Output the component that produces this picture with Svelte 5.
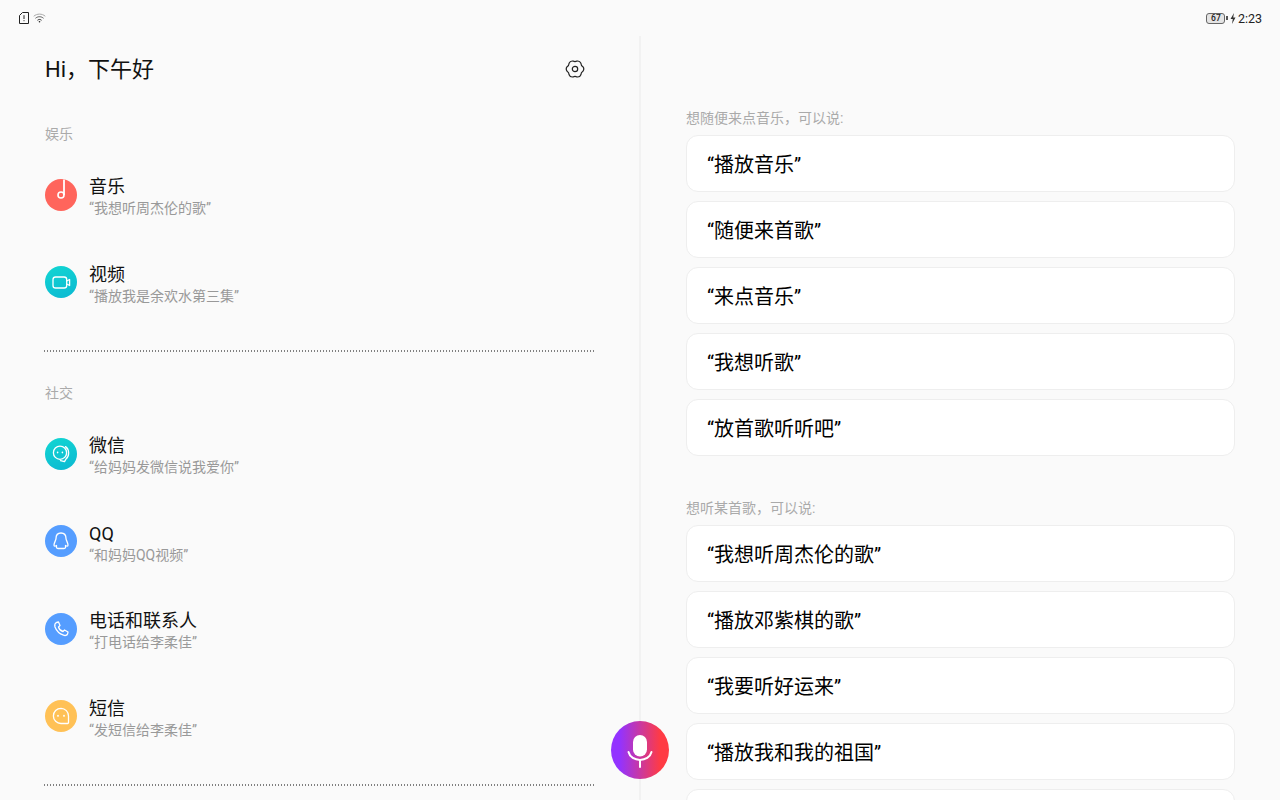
<script>
  const ent = [
    { t: '音乐', s: '“我想听周杰伦的歌”', k: 'music' },
    { t: '视频', s: '“播放我是余欢水第三集”', k: 'video' }
  ];
  const soc = [
    { t: '微信', s: '“给妈妈发微信说我爱你”', k: 'wechat' },
    { t: 'QQ', s: '“和妈妈QQ视频”', k: 'qq' },
    { t: '电话和联系人', s: '“打电话给李柔佳”', k: 'phone' },
    { t: '短信', s: '“发短信给李柔佳”', k: 'sms' }
  ];
  const groups = [
    { label: '想随便来点音乐，可以说:', items: ['“播放音乐”', '“随便来首歌”', '“来点音乐”', '“我想听歌”', '“放首歌听听吧”'] },
    { label: '想听某首歌，可以说:', items: ['“我想听周杰伦的歌”', '“播放邓紫棋的歌”', '“我要听好运来”', '“播放我和我的祖国”', ''] }
  ];
  const sections = [
    { label: '娱乐', items: ent },
    { label: '社交', items: soc }
  ];
  const pol = (r, deg) => {
    const a = (deg * Math.PI) / 180;
    return `${(10 + r * Math.cos(a)).toFixed(2)} ${(10 + r * Math.sin(a)).toFixed(2)}`;
  };
  let gearPath = `M${pol(8.2, -16)}`;
  for (let i = 0; i < 6; i++) {
    const a = i * 60;
    gearPath += ` Q${pol(9.7, a)} ${pol(8.2, a + 16)} Q${pol(6.9, a + 30)} ${pol(8.2, a + 44)}`;
  }
  gearPath += ' Z';
</script>

{#snippet icon(k)}
  <span class="ico {k}">
    <svg viewBox="0 0 32 32" width="32" height="32" fill="none" stroke="#fff" stroke-width="1.3" stroke-linecap="round" stroke-linejoin="round">
      {#if k === 'music'}
        <path d="M19 0.5 V16" stroke-width="1.8" stroke-linecap="butt" />
        <circle cx="16" cy="16" r="3" stroke-width="1.6" />
      {:else if k === 'video'}
        <rect x="8" y="11" width="13.7" height="11" rx="2.6" />
        <path d="M21.7 15 L24.6 13.5 V19.5 L21.7 18" />
      {:else if k === 'wechat'}
        <circle cx="15" cy="14.7" r="6.6" />
        <path d="M20.5 8.6 C24.6 11.5 24.6 18 21 21 L19.5 23.6 L15.5 22.6" />
        <path d="M12.6 14.2 v.4 M17.4 14.2 v.4" stroke-width="1.6" />
      {:else if k === 'qq'}
        <path d="M16 8 C12.5 8 11 10.5 11 13.5 C11 15.5 9 17.5 9 20 C9 21.5 10 21.5 11.5 20.5 C11.5 22 11 23.5 13 23.5 H19 C21 23.5 20.5 22 20.5 20.5 C22 21.5 23 21.5 23 20 C23 17.5 21 15.5 21 13.5 C21 10.5 19.5 8 16 8 Z" />
      {:else if k === 'phone'}
        <path d="M11.5 9.5 L13.5 9 L15 12.5 L13.5 14 C14 16 16 18 18 18.5 L19.5 17 L23 19 L22.5 21 C22 22.5 20 22.8 18.5 22.2 C14.5 20.8 11.5 18 10 14 C9.5 12 10 10.2 11.5 9.5 Z" />
      {:else if k === 'sms'}
        <path d="M16 8.3 A7.6 7.6 0 1 0 16 23.5 H22.6 A1 1 0 0 0 23.5 22.6 V16 A7.6 7.6 0 0 0 16 8.3 Z" />
        <path d="M13 15.6 v.4 M19 15.6 v.4" stroke-width="1.7" />
      {/if}
    </svg>
  </span>
{/snippet}

<div class="screen">
  <header class="status">
    <div class="st-left">
      <svg width="10" height="12" viewBox="0 0 10 12" fill="none" stroke="#222" stroke-width="1">
        <path d="M3.5 .5 H9.5 V11.5 H.5 V3.5 Z" />
        <path d="M5 3.2 V7 M5 8.2 V9.2" />
      </svg>
      <svg width="13" height="10" viewBox="0 0 13 10" fill="none" stroke-linecap="round">
        <path d="M1 3 C4 .4 9 .4 12 3" stroke="#aaa" />
        <path d="M2.8 5 C5 3.2 8 3.2 10.2 5" stroke="#555" />
        <path d="M4.8 7 C5.8 6.2 7.2 6.2 8.2 7" stroke="#222" />
        <circle cx="6.5" cy="8.8" r=".8" fill="#222" />
      </svg>
    </div>
    <div class="st-right">
      <span class="batt">67</span><span class="nub"></span>
      <svg width="6" height="11" viewBox="0 0 6 11"><path d="M4 0 L.5 6 H2.8 L2 11 L5.5 4.5 H3.2 Z" fill="#333" /></svg>
      <span class="time">2:23</span>
    </div>
  </header>

  <main class="body">
    <section class="left">
      <div class="head">
        <h1>Hi，下午好</h1>
        <svg class="gear" width="20" height="20" viewBox="0 0 20 20" fill="none" stroke="#222" stroke-width="1.2" stroke-linejoin="round">
          <path d={gearPath} />
          <circle cx="10" cy="10" r="2.7" />
        </svg>
      </div>

      {#each sections as sec}
        <div class="sec">
          <div class="sec-label">{sec.label}</div>
          <div class="list">
            {#each sec.items as it}
              <div class="item">
                {@render icon(it.k)}
                <div class="txt">
                  <div class="t">{it.t}</div>
                  <div class="s">{it.s}</div>
                </div>
              </div>
            {/each}
          </div>
          <div class="rule"></div>
        </div>
      {/each}
    </section>

    <section class="right">
      {#each groups as g}
        <div class="group">
          <div class="g-label">{g.label}</div>
          {#each g.items as c}
            <div class="card">{c}</div>
          {/each}
        </div>
      {/each}
    </section>
  </main>

  <button class="mic" aria-label="mic">
    <svg width="58" height="58" viewBox="0 0 58 58" fill="none" stroke="#fff" stroke-linecap="round">
      <rect x="22" y="14" width="14" height="21.5" rx="7" fill="#fff" stroke="none" />
      <path d="M17.5 31 C20 41.5 38 41.5 40.5 31" stroke-width="2" />
      <path d="M29 39 V46" stroke-width="2" />
    </svg>
  </button>
</div>

<style>
  :global(body) { margin: 0; background: #fafafa; }
  .screen {
    position: relative;
    width: 1280px;
    height: 800px;
    overflow: hidden;
    background: #fafafa;
    font-family: "Roboto", "Noto Sans CJK SC", sans-serif;
    color: #111;
  }
  .status {
    height: 36px;
    display: flex;
    justify-content: space-between;
    align-items: center;
    padding: 0 18px 0 19px;
  }
  .st-left { display: flex; align-items: center; gap: 4px; }
  .st-right { display: flex; align-items: center; font-size: 12.5px; color: #222; }
  .batt {
    box-sizing: border-box;
    width: 19px; height: 11px; border: 1px solid #666; border-radius: 3px;
    background: #e4e4e4; font-size: 8.5px; font-weight: 500; line-height: 9px; text-align: center;
  }
  .nub { width: 1.5px; height: 4px; background: #555; margin: 0 2px 0 1px; }
  .time { margin-left: 2px; }
  .body { display: flex; height: 764px; }
  .left {
    box-sizing: border-box;
    width: 641px;
    flex: none;
    padding-left: 44px;
    border-right: 2px solid #f2f2f2;
  }
  .head {
    height: 66px;
    display: flex;
    justify-content: space-between;
    align-items: center;
    padding-left: 1px;
    width: 541px;
    box-sizing: border-box;
  }
  .gear { margin-top: -1px; }
  h1 { margin: 2px 0 0; font-size: 22px; font-weight: 400; line-height: 66px; }
  .sec { width: 550px; }
  .sec + .sec { padding-top: 9px; }
  .sec-label { font-size: 14px; color: #aaa; padding: 22px 0 0 1px; line-height: 20px; height: 49px; box-sizing: border-box; }
  .item {
    height: 87.5px;
    display: flex;
    align-items: center;
    gap: 12px;
    padding-left: 1px;
  }
  .txt { margin-top: 6px; }
  .rule {
    height: 2px;
    margin-top: 24px;
    background: repeating-linear-gradient(90deg, #808080 0 1px, transparent 1px 3px);
  }
  .ico { width: 32px; height: 32px; border-radius: 50%; flex: none; display: block; }
  .ico svg { display: block; }
  .music { background: #ff655c; }
  .video, .wechat { background: linear-gradient(160deg, #12d6d2, #0bb8d2); }
  .qq, .phone { background: #559dff; }
  .sms { background: #ffc156; }
  .t { font-size: 18px; line-height: 22px; color: #111; }
  .s { font-size: 14px; line-height: 21px; color: #999; }
  .right {
    width: 549px;
    margin-left: 45px;
    padding-top: 72px;
    flex: none;
  }
  .group { margin-bottom: 42px; }
  .g-label { font-size: 14px; line-height: 20px; color: #aaa; margin-bottom: 7px; }
  .card {
    box-sizing: border-box;
    height: 57px;
    margin-bottom: 9px;
    background: #fff;
    border: 1px solid #eeeeee;
    border-radius: 12px;
    font-size: 20px;
    line-height: 59px;
    padding-left: 20px;
    color: #000;
  }
  .mic {
    position: absolute;
    left: 611px;
    top: 721px;
    width: 58px;
    height: 58px;
    border: 0;
    padding: 0;
    border-radius: 50%;
    background: linear-gradient(90deg, #9333ff 15%, #ff3b44 85%);
  }
  .mic svg { display: block; }
</style>
